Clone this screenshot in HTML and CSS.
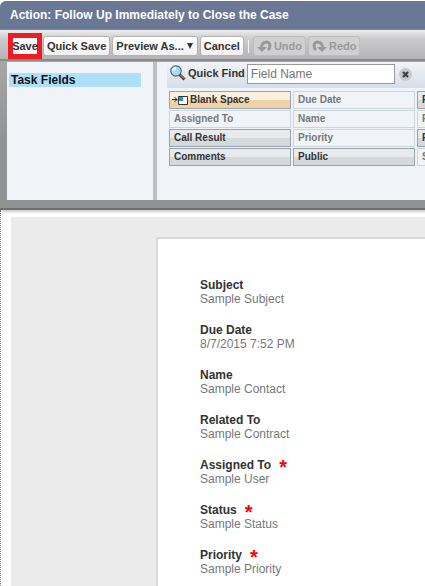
FILE: index.html
```html
<!DOCTYPE html>
<html lang="en">
<head>
<meta charset="utf-8">
<title>Action Layout Editor</title>
<link rel="stylesheet" href="styles.css">
</head>
<body>
<section class="editor">
  <h1 class="title">Action: Follow Up Immediately to Close the Case</h1>
  <div class="toolbar">
    <button class="save" type="button">Save</button>
    <button class="btn" type="button">Quick Save</button>
    <button class="btn" type="button">Preview As...<svg width="8" height="6" viewBox="0 0 8 6"><path d="M1 0h6L4 6z" fill="#333"/></svg></button>
    <button class="btn" type="button">Cancel</button>
    <span class="separator"></span>
    <button class="btn off" type="button" disabled><svg width="15" height="13" viewBox="0 0 15 13"><path d="M0 7h10l-5 5z" fill="#999"/><path d="M4.500 8C4.500 1 13 0 13 6c0 2-1 3-2 4" fill="none" stroke="#999" stroke-width="3"/></svg>Undo</button>
    <button class="btn off" type="button" disabled><svg width="15" height="13" viewBox="0 0 15 13"><path d="M15 7H5l5 5z" fill="#999"/><path d="M10.500 8C10.500 1 2 0 2 6c0 2 1 3 2 4" fill="none" stroke="#999" stroke-width="3"/></svg>Redo</button>
  </div>
  <div class="panels">
    <nav class="categories"><a class="category" href="#fields">Task Fields</a></nav>
    <div class="palette" id="fields">
      <div class="find">
        <svg width="16" height="16" viewBox="0 0 16 16"><path d="M9.500 9.500l5 5" stroke="#4b4031" stroke-width="3"/><path d="M10 9.500l4 4" stroke="#d9a441" stroke-width="1"/><circle cx="6" cy="6" r="5.200" fill="#a9dcf5" stroke="#46637f" stroke-width="1.200"/><path d="M3 6c0-2 1-3 3-3" stroke="#fff" stroke-width="2" fill="none"/></svg>
        <label for="quick">Quick Find</label>
        <input id="quick" type="text" placeholder="Field Name">
        <button class="clear" type="button" aria-label="Clear"><svg width="13" height="13" viewBox="0 0 13 13"><circle cx="6.500" cy="6.500" r="6.500" fill="#c5cbcd"/><path d="M4 4l5 5M9 4l-5 5" stroke="#3d3d3d" stroke-width="2.200"/></svg></button>
      </div>
      <div class="fields">
        <div class="field blank"><svg width="16" height="11" viewBox="0 0 16 11"><path d="M0 4.500h5M2.500 2l2.500 2.500L2.500 7" stroke="#222" fill="none"/><path d="M6.500 1.500h9v8h-9z" fill="#fff" stroke="#333"/><path d="M7 2h4v4H7z" fill="#1296f5"/></svg>Blank Space</div>
        <div class="field used">Assigned To</div>
        <div class="field">Call Result</div>
        <div class="field">Comments</div>
        <div class="field used">Due Date</div>
        <div class="field used">Name</div>
        <div class="field used">Priority</div>
        <div class="field">Public</div>
        <div class="field">R</div>
        <div class="field used">R</div>
        <div class="field">R</div>
        <div class="field used">S</div>
      </div>
    </div>
  </div>
</section>
<main class="canvas">
  <div class="desk">
    <dl class="card">
      <div class="row"><dt>Subject</dt><dd>Sample Subject</dd></div>
      <div class="row"><dt>Due Date</dt><dd>8/7/2015 7:52 PM</dd></div>
      <div class="row"><dt>Name</dt><dd>Sample Contact</dd></div>
      <div class="row"><dt>Related To</dt><dd>Sample Contract</dd></div>
      <div class="row"><dt>Assigned To<span class="required">*</span></dt><dd>Sample User</dd></div>
      <div class="row"><dt>Status<span class="required">*</span></dt><dd>Sample Status</dd></div>
      <div class="row"><dt>Priority<span class="required">*</span></dt><dd>Sample Priority</dd></div>
    </dl>
  </div>
</main>
</body>
</html>
```
FILE: styles.css
```css
* { box-sizing: border-box; }
html, body { height: 100%; }
body {
  margin: 0;
  display: flex;
  flex-direction: column;
  overflow: hidden;
  background: #fff;
  color: #333;
  font: 12px/14px "Liberation Sans", Arial, sans-serif;
}
button, input { font: inherit; color: inherit; margin: 0; }
svg { display: block; flex: none; }

.editor {
  flex: none;
  margin-top: 1px;
  border-bottom: 2px solid #706f6f;
  border-radius: 6px 0 0 0;
  background: linear-gradient(#b5b5b7, #929292 140px);
  box-shadow: 2px 2px 3px #ccc;
  overflow: hidden;
}
.title {
  margin: 0;
  padding: 7px 10px;
  background: #6a7896;
  border-bottom: 1px solid #8b8389;
  color: #fff;
  font-size: 12px;
  line-height: 14px;
}
.toolbar {
  display: flex;
  align-items: center;
  gap: 2px;
  height: 31px;
  padding: 3px 0 0 8px;
  border-bottom: 2px solid #89898b;
  background: linear-gradient(#ededed, #cbcbcd 30%, #b5b5b8);
  font-size: 11px;
}
.btn {
  display: flex;
  align-items: center;
  gap: 2px;
  height: 20px;
  padding: 0 3px;
  border: 1px solid #b3b3b3;
  border-radius: 3px;
  background: linear-gradient(#fff, #f1f1f1);
  font-weight: bold;
  white-space: nowrap;
}
.save {
  display: flex;
  align-items: center;
  justify-content: center;
  height: 26px;
  width: 34px;
  margin-right: -1px;
  padding: 0;
  border: 5px solid #ed1c24;
  background: #fafafa;
  font-weight: bold;
}
.separator { width: 1px; height: 13px; margin: 0 2px; background: #f5f5f5; }
.off { background: #d0d0d1; border-color: #bdbdbe; color: #999; }

.panels {
  display: grid;
  grid-template-columns: 146px 1fr;
  gap: 4px;
  height: 138px;
  margin: 1px 0 8px 7px;
  background: #bdbfc3;
}
.categories { padding: 11px 12px 0 2px; background: #f0f4f8; }
.category {
  display: block;
  padding-left: 2px;
  background: #afe0f9;
  color: #111;
  font-weight: bold;
  text-decoration: none;
}
.palette { padding: 2px 0 0 10px; background: #f0f4f8; overflow: hidden; }
.find {
  display: flex;
  align-items: flex-start;
  height: 24px;
  padding-left: 3px;
  background: linear-gradient(#eff2f6, #d5deea);
}
.find svg { margin-top: 1px; }
.find label { margin: 2px 2px 0; font-size: 11px; font-weight: bold; white-space: nowrap; }
.find input {
  width: 148px;
  height: 20px;
  padding: 0 3px;
  border: 1px solid #999;
  background: #fff;
}
.find input::placeholder { color: #777; opacity: 1; }
.clear { margin: 3px 0 0 4px; padding: 0; border: 0; background: none; }
.fields {
  display: grid;
  grid-template-rows: repeat(4, 18px);
  grid-auto-flow: column;
  grid-auto-columns: 122px;
  gap: 1px 2px;
  padding: 3px 0 0 2px;
}
.field {
  display: flex;
  padding: 1px 4px;
  border: 1px solid #98a3ad;
  background: linear-gradient(#e7ebee 50%, #d4d9dc 50%);
  font-size: 10px;
  font-weight: bold;
  white-space: nowrap;
}
.used { border-color: #cbd6da; background: #f0f4f8; color: #777; }
.blank {
  gap: 2px;
  padding-left: 2px;
  background: linear-gradient(#fcf0e2 50%, #f0d2a8 50%);
}
.blank svg { margin-top: 2px; }

.canvas {
  flex: 1;
  min-height: 0;
  padding: 7px 0 0 10px;
  border-left: 1px dotted #777;
}
.desk { height: 100%; padding: 20px 0 0 145px; background: #ebebeb; }
.card {
  height: 100%;
  margin: 0;
  padding: 39px 0 0 42px;
  border: solid #dadada;
  border-width: 2px 0 0 2px;
  background: #fff;
}
.row { height: 45px; }
dt { display: flex; font-weight: bold; }
dd { margin: 0; color: #777; }
.required {
  height: 14px;
  margin-left: 8px;
  color: #f00;
  font-size: 20px;
  line-height: 18px;
}
```
